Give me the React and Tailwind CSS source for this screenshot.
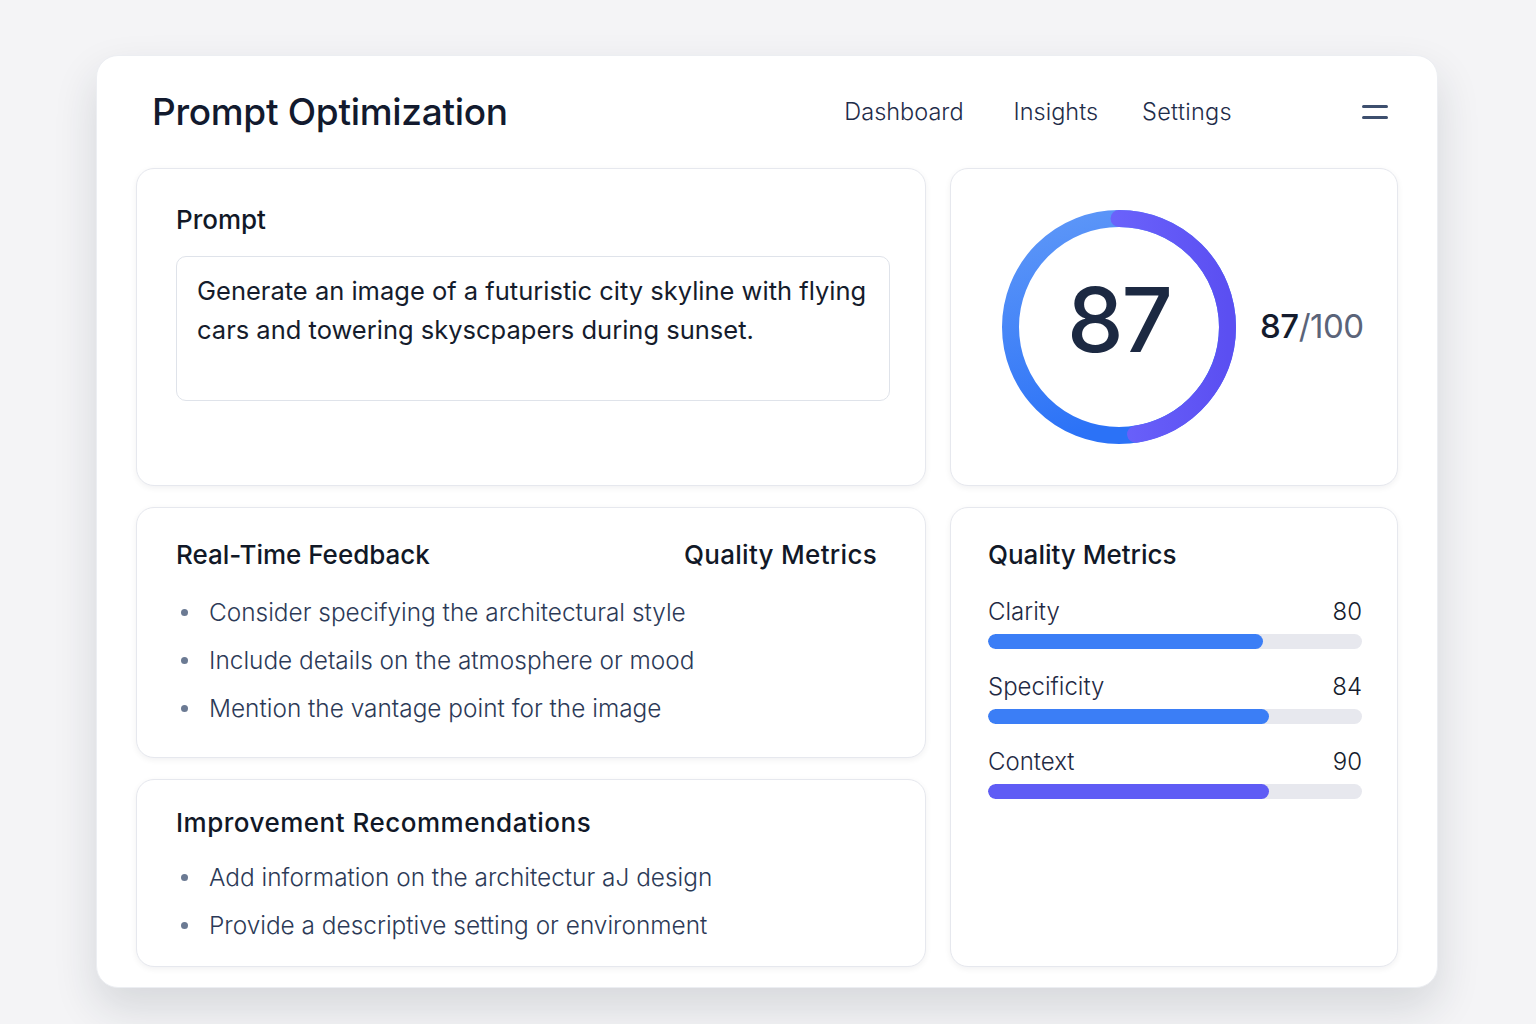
import React from 'react';

const feedback = [
  'Consider specifying the architectural style',
  'Include details on the atmosphere or mood',
  'Mention the vantage point for the image',
];

const improvements = [
  'Add information on the architectur aJ design',
  'Provide a descriptive setting or environment',
];

const metrics = [
  { label: 'Clarity', value: 80, fill: 73.5, color: 'bg-[#3b7ef6]' },
  { label: 'Specificity', value: 84, fill: 75, color: 'bg-[#3b7ef6]' },
  { label: 'Context', value: 90, fill: 75, color: 'bg-[#5f5cf5]' },
];

function Card({ className = '', children }) {
  return (
    <div className={`bg-white rounded-[18px] border border-[#e6e8ee] shadow-[0_2px_6px_rgba(15,23,42,0.06)] ${className}`}>
      {children}
    </div>
  );
}

function Bullets({ items }) {
  return (
    <ul className="flex flex-col gap-[16px]">
      {items.map(t => (
        <li key={t} className="flex items-center h-[32px]">
          <span className="w-[7px] h-[7px] rounded-full bg-[#6b7a93] ml-[5px] mr-[21px]" />
          <span className="text-[24.4px] font-[350] text-[#2c3a57]">{t}</span>
        </li>
      ))}
    </ul>
  );
}

function Gauge() {
  const r = 108.5;
  const c = 2 * Math.PI * r;
  const arc = (171 / 360) * c;
  return (
    <svg width="236" height="236" viewBox="0 0 236 236">
      <defs>
        <linearGradient id="blueG" x1="0" y1="0" x2="0.3" y2="1">
          <stop offset="0" stopColor="#5f98f8" />
          <stop offset="1" stopColor="#2b72f7" />
        </linearGradient>
        <linearGradient id="purpG" x1="0" y1="0" x2="0" y2="1">
          <stop offset="0" stopColor="#5a5df8" />
          <stop offset="0.45" stopColor="#6b63fb" />
          <stop offset="1" stopColor="#5b4ff2" />
        </linearGradient>
      </defs>
      <circle cx="118" cy="118" r={r} fill="none" stroke="url(#blueG)" strokeWidth="17" />
      <circle
        cx="118"
        cy="118"
        r={r}
        fill="none"
        stroke="url(#purpG)"
        strokeWidth="17"
        strokeLinecap="round"
        strokeDasharray={`${arc} ${c}`}
        transform="rotate(-90 118 118)"
      />
    </svg>
  );
}

export default function App() {
  return (
    <div className="min-h-[1024px] bg-[#f4f4f6] pt-[55px] pl-[96px] font-['Inter','Liberation_Sans',sans-serif]">
      <div className="w-[1342px] h-[933px] bg-white rounded-[22px] border border-[#eceef2] shadow-[0_20px_44px_rgba(30,41,59,0.14)] px-[39px]">
        <header className="h-[112px] flex items-center pl-[16px] pr-[10px]">
          <h1 className="text-[37px] font-medium text-[#121a2e] tracking-[-0.3px]">Prompt Optimization</h1>
          <nav className="ml-auto flex items-center text-[23.5px] font-[350] text-[#1f2d4a]">
            <span>Dashboard</span>
            <span className="ml-[50px]">Insights</span>
            <span className="ml-[44px] tracking-[0.3px]">Settings</span>
          </nav>
          <div className="ml-[130px] flex flex-col gap-[8px]">
            <span className="block w-[26px] h-[3px] rounded-full bg-[#3d4f6e]" />
            <span className="block w-[26px] h-[3px] rounded-full bg-[#3d4f6e]" />
          </div>
        </header>

        <div className="grid grid-cols-[790px_448px] gap-x-[24px] gap-y-[21px]">
          <Card className="h-[318px] pl-[39px] pr-[35px] pt-[35px]">
            <h2 className="text-[26px] font-medium text-[#111827] leading-[32px]">Prompt</h2>
            <div className="mt-[20px] h-[145px] rounded-[10px] border border-[#dfe3ea] px-[20px] pt-[14px] text-[25.5px] leading-[39px] text-[#151c2c]">
              Generate an image of a futuristic city skyline with flying cars and towering skyscpapers during sunset.
            </div>
          </Card>

          <Card className="h-[318px] flex items-center pl-[50px]">
            <div className="relative w-[236px] h-[236px]">
              <Gauge />
              <div className="absolute inset-0 flex items-center justify-center text-[90px] font-medium text-[#1c2942] tracking-[-2px] pb-[16px]">
                87
              </div>
            </div>
            <div className="ml-[23px] text-[33px] tracking-[-0.5px]">
              <span className="font-medium text-[#141b2d]">87</span>
              <span className="text-[#5b6479]">/100</span>
            </div>
          </Card>

          <div className="flex flex-col gap-[21px]">
            <Card className="h-[251px] pl-[39px] pr-[48px] pt-[30px]">
              <div className="flex items-center justify-between h-[32px] text-[26px] font-medium text-[#111827]">
                <h2>Real-Time Feedback</h2>
                <h2 className="tracking-[0.3px]">Quality Metrics</h2>
              </div>
              <div className="mt-[26px]">
                <Bullets items={feedback} />
              </div>
            </Card>
            <Card className="h-[188px] pl-[39px] pr-[40px] pt-[26px]">
              <h2 className="h-[32px] flex items-center text-[26px] font-medium text-[#111827] tracking-[0.5px]">Improvement Recommendations</h2>
              <div className="mt-[23px]">
                <Bullets items={improvements} />
              </div>
            </Card>
          </div>

          <Card className="h-[460px] pl-[37px] pr-[35px] pt-[30px]">
            <h2 className="h-[32px] flex items-center text-[26px] font-medium text-[#111827]">Quality Metrics</h2>
            <div className="mt-[26px] flex flex-col gap-[22px]">
              {metrics.map(m => (
                <div key={m.label}>
                  <div className="flex items-center justify-between h-[32px] text-[24px] font-[350] text-[#1f2a44]">
                    <span>{m.label}</span>
                    <span className="text-[#141b2d]">{m.value}</span>
                  </div>
                  <div className="mt-[6px] h-[15px] rounded-full bg-[#e7e8ee] overflow-hidden">
                    <div className={`h-full rounded-full ${m.color}`} style={{ width: `${m.fill}%` }} />
                  </div>
                </div>
              ))}
            </div>
          </Card>
        </div>
      </div>
    </div>
  );
}
